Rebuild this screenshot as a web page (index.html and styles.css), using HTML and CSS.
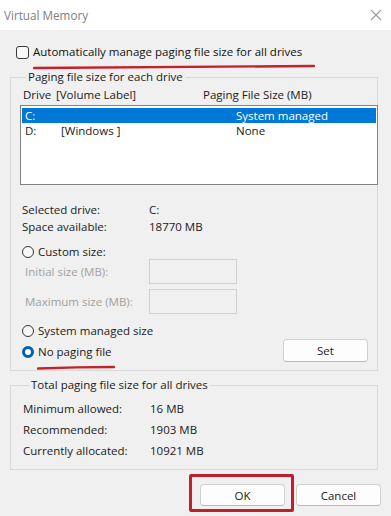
FILE: index.html
```html
<!DOCTYPE html>
<html>
<head>
<meta charset="utf-8">
<link rel="stylesheet" href="styles.css">
</head>
<body>
<div class="window">
  <div class="titlebar">
    <span class="title">Virtual Memory</span>
    <svg class="close" width="12" height="12" viewBox="0 0 12 12"><path d="M1 1 L11 11 M11 1 L1 11" stroke="#9a9a9a" stroke-width="1.1" fill="none"/></svg>
  </div>
  <div class="content">
    <label class="auto">
      <span class="checkbox"></span>
      <span>Automatically manage paging file size for all drives</span>
      <svg class="mark mark-auto" width="282" height="6" viewBox="0 0 282 6"><path d="M1 4 Q 140 2.5 281 2" stroke="#c3222b" stroke-width="2.4" fill="none" stroke-linecap="round"/></svg>
    </label>

    <fieldset class="group group-drives">
      <legend>Paging file size for each drive</legend>
      <div class="cols">
        <span class="col-drive">Drive</span>
        <span class="col-label">[Volume Label]</span>
        <span class="col-size">Paging File Size (MB)</span>
      </div>
      <div class="listbox">
        <div class="row selected"><span class="c-drive">C:</span><span class="c-label"></span><span class="c-size">System managed</span></div>
        <div class="row"><span class="c-drive">D:</span><span class="c-label">[Windows ]</span><span class="c-size">None</span></div>
      </div>
      <div class="info">
        <div class="kv"><span class="k">Selected drive:</span><span class="v">C:</span></div>
        <div class="kv"><span class="k">Space available:</span><span class="v">18770 MB</span></div>
      </div>
      <div class="radio-row custom"><span class="radio"></span><span>Custom size:</span></div>
      <div class="field"><span class="flabel">Initial size (MB):</span><span class="textbox"></span></div>
      <div class="field"><span class="flabel">Maximum size (MB):</span><span class="textbox"></span></div>
      <div class="radio-row sys"><span class="radio"></span><span>System managed size</span></div>
      <div class="nopaging">
        <div class="radio-row np"><span class="radio checked"></span><span>No paging file</span>
          <svg class="mark mark-np" width="78" height="5" viewBox="0 0 78 5"><path d="M1 3.5 Q 40 2 77 2" stroke="#c3222b" stroke-width="2.4" fill="none" stroke-linecap="round"/></svg>
        </div>
        <button class="btn set">Set</button>
      </div>
    </fieldset>

    <fieldset class="group group-total">
      <legend>Total paging file size for all drives</legend>
      <div class="kv2"><span class="k">Minimum allowed:</span><span class="v">16 MB</span></div>
      <div class="kv2"><span class="k">Recommended:</span><span class="v">1903 MB</span></div>
      <div class="kv2"><span class="k">Currently allocated:</span><span class="v">10921 MB</span></div>
    </fieldset>

    <div class="buttons">
      <span class="ok-wrap"><button class="btn ok">OK</button><span class="redbox"></span></span>
      <button class="btn cancel">Cancel</button>
    </div>
  </div>
</div>
</body>
</html>
```
FILE: styles.css
```css
* { box-sizing: border-box; }
html, body { margin: 0; padding: 0; }
body {
  width: 391px;
  height: 516px;
  overflow: hidden;
  font-family: "Open Sans", "Noto Sans", sans-serif;
  font-size: 11.5px;
  line-height: 16px;
  color: #1a1a1a;
  background: #f0f0f0;
}
.window { width: 391px; height: 516px; display: flex; flex-direction: column; }
.titlebar {
  height: 30px;
  background: #ffffff;
  display: flex;
  align-items: center;
  justify-content: space-between;
  padding: 0 9px 0 4px;
  flex: none;
}
.title { color: #808080; font-size: 11.7px; }
.content {
  flex: 1;
  background: #f0f0f0;
  padding: 0 13px 0 10px;
  display: flex;
  flex-direction: column;
}
.auto {
  position: relative;
  display: flex;
  align-items: center;
  gap: 4px;
  margin-top: 14px;
  padding-left: 6px;
  height: 16px;
  color: #111;
}
.checkbox {
  width: 13px; height: 13px;
  border: 1px solid #3a3a3a;
  border-radius: 3px;
  background: #f8f8f8;
  flex: none;
}
.mark { position: absolute; }
.mark-auto { left: 23px; top: 20px; }

.group {
  margin: 0;
  border: 1px solid #d9d9d9;
  padding: 0;
  min-width: 0;
}
.group legend {
  margin-left: 6px;
  padding: 0 2px;
  line-height: 16px;
  color: #1a1a1a;
}
.group-drives { margin-top: 9px; padding: 1px 0 8px 9px; }
.cols {
  display: flex;
  height: 18px;
  align-items: center;
  padding-left: 3px;
}
.col-drive { width: 33px; }
.col-label { width: 147px; }
.listbox {
  margin-top: 1px;
  margin-right: -1px;
  height: 80px;
  background: #fff;
  border: 1px solid #828282;
  padding: 2px 1px;
}
.row {
  display: flex;
  height: 15px;
  line-height: 15px;
  align-items: center;
  padding-left: 3px;
}
.row.selected { background: #0078d7; color: #fff; }
.c-drive { width: 36px; }
.c-label { width: 175px; }
.info { margin-top: 16px; padding-left: 2px; }
.kv { display: flex; height: 17px; align-items: center; }
.kv .k { width: 127px; }
.radio-row {
  position: relative;
  display: flex;
  align-items: center;
  gap: 4px;
  height: 16px;
  padding-left: 2px;
}
.custom { margin-top: 9px; }
.radio {
  width: 12px; height: 12px;
  border-radius: 50%;
  border: 1px solid #333;
  background: #f8f8f8;
  flex: none;
}
.radio.checked {
  border: 3.5px solid #005fb8;
  background: #fff;
}
.field {
  display: flex;
  align-items: center;
  height: 25px;
  padding-left: 5px;
  color: #a0a0a0;
  margin-top: -1px;
}
.field + .field { margin-top: 5px; }
.flabel { width: 124px; }
.textbox {
  width: 88px; height: 25px;
  border: 1px solid #cfcfcf;
  background: #f0f0f0;
}
.sys { margin-top: 9px; }
.nopaging {
  display: flex;
  justify-content: space-between;
  align-items: flex-end;
  margin-top: 0;
  padding-right: 9px;
}
.np { margin-bottom: 2px; }
.mark-np { left: 17px; top: 21px; }
.btn {
  font-family: inherit;
  font-size: 11.5px;
  color: #1a1a1a;
  background: #fdfdfd;
  border: 1px solid #d0d0d0;
  border-bottom-color: #b8b8b8;
  border-radius: 4px;
  padding: 0;
}
.set { width: 85px; height: 23px; }
.group-total { margin-top: 6px; padding: 5px 0 8px 12px; height: 93px; }
.kv2 { display: flex; height: 21px; align-items: center; }
.kv2 .k { width: 127px; }
.buttons {
  display: flex;
  justify-content: flex-end;
  gap: 11px;
  margin-top: 14px;
  margin-right: -3px;
}
.ok-wrap { position: relative; display: flex; }
.ok, .cancel { width: 85px; height: 22px; }
.redbox {
  position: absolute;
  left: -11px; top: -10px;
  width: 105px; height: 38px;
  border: 3px solid #c0202a;
  border-radius: 2px;
}
```
